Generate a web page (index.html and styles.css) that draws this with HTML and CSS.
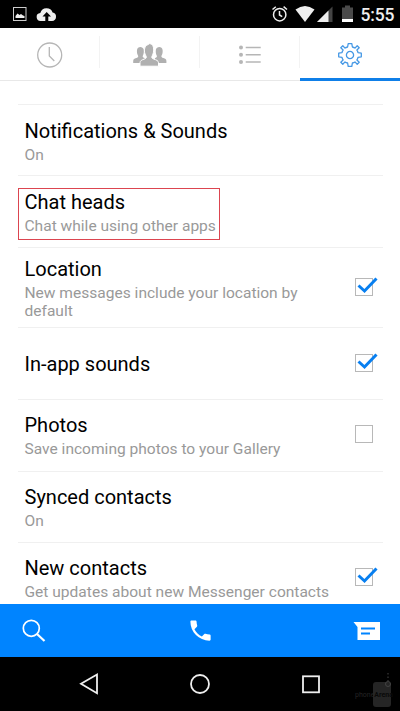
FILE: index.html
```html
<!DOCTYPE html>
<html lang="en">
<head>
<meta charset="utf-8">
<title>Messenger settings</title>
<link rel="stylesheet" href="styles.css">
</head>
<body>
<div class="screen">
  <header class="status">
    <svg class="status-left" width="60" height="28" viewBox="0 0 60 28">
      <rect x="13.500" y="7.500" width="12.500" height="13" fill="none" stroke="#ccc"/>
      <path d="M15.500 18v-2l2-2.500 2 1.500 1.500-1 2 1.500 1.500 .5v2z" fill="#eee"/>
      <path d="M41 21a4 4 0 0 1-.7-8 6.500 6.500 0 0 1 12.300-.5A4.300 4.300 0 0 1 52 21z" fill="#eee"/>
      <path d="M46.700 12l4.300 4.600h-2.700V21h-3v-4.400h-2.800z" fill="#000"/>
    </svg>
    <svg class="status-right" width="72" height="28" viewBox="270 0 72 28">
      <g fill="none" stroke="#eee" stroke-width="1.500"><circle cx="279.700" cy="14.700" r="6.200"/><path d="M279.500 11v4l2.700 1.700M272.500 9.500l3.300-2.800M283.600 6.700l3.400 2.800"/></g>
      <path d="M295.500 9.500Q305 2.500 314.500 9.500L305 22z" fill="#eee"/>
      <path d="M332.500 6.500V22H317z" fill="#444"/><path d="M328.500 10.500V22H317z" fill="#eee"/>
    </svg>
    <svg class="battery" width="12" height="28" viewBox="0 0 12 28"><path d="M0 7.500h3V5.500h5v2h3V22H0z" fill="#4a4a4a"/><path d="M0 19h11v3H0z" fill="#fff"/></svg>
    <span class="time">5:55</span>
  </header>
  <nav class="tabs">
    <div class="tab"><svg width="28" height="28" viewBox="0 0 28 28" fill="none" stroke="#b6b6b6" stroke-width="1.300"><circle cx="13.700" cy="14" r="12"/><path d="M13.300 6v9l5 5"/></svg></div>
    <div class="tab"><svg width="36" height="28" viewBox="0 0 36 28" fill="#b0b0b0">
      <path d="M1.200 22v-2c0-1.600 1.200-2.200 3-2.900 1.600-.6 2.500-1.200 1.800-2.600C5 13 4.800 11 5 9 5.300 5 11 5 11.700 8.500c.3 2.200.1 4.500-.8 6-.7 1.400.2 2 1.800 2.600v5z"/>
      <path d="M34.400 22v-2c0-1.600-1.200-2.200-3-2.900-1.600-.6-2.500-1.200-1.800-2.600 1-1.500 1.200-3.500 1-5.500-.3-4-6-4-6.700-.5-.3 2.200-.1 4.500.8 6 .7 1.400-.2 2-1.800 2.600v5z"/>
      <path d="M8 25.200v-3.500c0-2 2-2.900 4.300-3.600 2.200-.7 2.500-1.800 1.500-3.500-1.200-2-1.500-4-1.300-6.500.4-3.800 3-4 5.300-5.600 2.800.8 3.800 2.800 3.800 5.600 0 2.500-.2 4.500-1.300 6.500-1 1.700-.7 2.800 1.500 3.500 2.300.7 4.700 1.600 4.700 3.600v3.500z" stroke="#fff" stroke-width="1"/></svg></div>
    <div class="tab"><svg width="24" height="24" viewBox="0 0 24 24" fill="#b6b6b6" stroke="#b6b6b6"><g stroke="none"><circle cx="3" cy="4.500" r="2"/><circle cx="3" cy="11.700" r="2"/><circle cx="3" cy="19" r="2"/></g><path d="M7.700 4.500h15M7.700 11.700h15M7.700 19h15" stroke-width="1.400"/></svg></div>
    <div class="tab active"><svg width="26" height="26" viewBox="-13 -13 26 26" fill="none" stroke="#4598e5" stroke-width="1.300" stroke-linejoin="round"><circle r="3.600"/><path d="M-1.800-11.300H1.800L2.400-8Q4-7.700 5-6.900L7.200-9.200 9.200-7.200 6.900-5Q7.700-4 8-2.400L11.300-1.800V1.800L8 2.400Q7.700 4 6.900 5L9.200 7.200 7.200 9.200 5 6.900Q4 7.700 2.400 8L1.800 11.300H-1.800L-2.400 8Q-4 7.700-5 6.900L-7.200 9.200-9.200 7.200-6.900 5Q-7.700 4-8 2.400L-11.300 1.800V-1.800L-8-2.400Q-7.700-4-6.900-5L-9.200-7.200-7.200-9.200-5-6.900Q-4-7.700-2.400-8z"/></svg></div>
  </nav>
  <main class="list">
    <section class="row notifications"><div class="copy"><h2>Notifications &amp; Sounds</h2><p>On</p></div></section>
    <section class="row chat"><div class="copy highlight"><h2>Chat heads</h2><p>Chat while using other apps</p></div></section>
    <section class="row location"><div class="copy"><h2>Location</h2><p>New messages include your location by default</p></div><span class="box checked"><svg width="24" height="18" viewBox="0 0 24 18"><path d="M3.500 8.500l6 5.500L21.500 1.500"/></svg></span></section>
    <section class="row sounds"><div class="copy"><h2>In-app sounds</h2></div><span class="box checked"><svg width="24" height="18" viewBox="0 0 24 18"><path d="M3.500 8.500l6 5.500L21.500 1.500"/></svg></span></section>
    <section class="row photos"><div class="copy"><h2>Photos</h2><p>Save incoming photos to your Gallery</p></div><span class="box"></span></section>
    <section class="row synced"><div class="copy"><h2>Synced contacts</h2><p>On</p></div></section>
    <section class="row contacts"><div class="copy"><h2>New contacts</h2><p>Get updates about new Messenger contacts</p></div><span class="box checked"><svg width="24" height="18" viewBox="0 0 24 18"><path d="M3.500 8.500l6 5.500L21.500 1.500"/></svg></span></section>
  </main>
  <footer class="actions">
    <svg width="24" height="24" viewBox="0 0 24 24" fill="none" stroke="#fff"><circle cx="9.300" cy="9.300" r="8" stroke-width="1.700"/><path d="M15 15l7.500 7" stroke-width="2.200"/></svg>
    <svg class="phone" width="27" height="27" viewBox="0 0 24 24" fill="#fff"><path d="M6.620 10.790c1.440 2.830 3.760 5.140 6.590 6.590l2.200-2.200c.27-.27.67-.36 1.020-.24 1.120.37 2.330.57 3.570.57.550 0 1 .450 1 1V20c0 .550-.450 1-1 1-9.390 0-17-7.610-17-17 0-.550.450-1 1-1h3.500c.550 0 1 .450 1 1 0 1.250.2 2.450.57 3.570.110.350.030.740-.250 1.020z"/></svg>
    <svg width="28" height="20" viewBox="0 0 28 20"><path d="M.5 1H27v18H4.500V6z" fill="#fff"/><path d="M8 7.500h14M8 12.500h9" stroke="#0084ff" stroke-width="1.800"/></svg>
  </footer>
  <div class="system">
    <svg width="22" height="24" viewBox="0 0 22 24"><path d="M19 2.500v18.700L3 11.800z"/></svg>
    <svg width="22" height="24" viewBox="0 0 22 24"><circle cx="11" cy="12" r="9"/></svg>
    <svg width="22" height="24" viewBox="0 0 22 24"><rect x="3" y="4.300" width="16" height="16"/></svg>
    <div class="watermark"><svg width="40" height="38" viewBox="0 0 40 38"><rect x="19" y="11" width="18" height="25" rx="3" fill="#252525"/><circle cx="34" cy="13" r="2.500" fill="none" stroke="#444"/><path d="M34 2v8" fill="none" stroke="#444" stroke-dasharray="1.500 2"/></svg><span class="brand">phone<b>Arena</b></span></div>
  </div>
</div>
</body>
</html>
```
FILE: styles.css
```css
* { box-sizing: border-box; }
body { margin: 0; font-family: Roboto, "Liberation Sans", sans-serif; background: #fff; }
svg { display: block; flex: none; }
.screen { width: 400px; height: 711px; display: flex; flex-direction: column; overflow: hidden; }
.status { height: 28px; flex: none; display: flex; align-items: center; background: #000; color: #eee; }
.status-right { margin-left: 210px; }
.time { margin: 2px 0 0 6.5px; font-size: 17.5px; line-height: 22px; font-weight: 500; letter-spacing: -.2px; }
.tabs { height: 53px; flex: none; display: grid; grid-template-columns: repeat(4, 1fr); border-bottom: 1px solid #e8e8e8; }
.tab { position: relative; display: flex; justify-content: center; align-items: center; height: 53px; }
.tab:not(.active)::after { content: ""; position: absolute; right: 0; top: 8px; width: 1px; height: 32px; background: #f3f3f3; }
.active { border-bottom: 3px solid #0f7fe8; padding-top: 3px; }
.list { flex: 1; min-height: 0; margin: 23px 17px 0 18px; overflow: hidden; }
.row { display: flex; justify-content: space-between; border-top: 1px solid #f0f0f0; padding-left: 6.5px; }
.copy { width: 300px; }
h2, p { margin: 0; font-weight: 400; }
h2 { font-size: 20px; line-height: 26px; color: #000; white-space: nowrap; }
p { font-size: 15.55px; line-height: 18px; color: #999; }
.notifications { height: 71px; padding-top: 13px; }
.notifications p, .photos p { margin-top: 2px; }
.chat { height: 72px; padding: 12px 0 0; }
.highlight { width: 202px; height: 52px; border: 1px solid #dc4550; padding: 0 0 0 5.5px; }
.highlight p { margin-top: 2px; white-space: nowrap; }
.location { height: 80px; padding-top: 8px; }
.location p { margin-top: 2px; }
.sounds { height: 72px; padding-top: 23px; }
.photos { height: 72px; padding-top: 12px; }
.synced { height: 71px; padding-top: 12px; }
.synced p { margin-top: 2px; }
.contacts { height: 72px; padding-top: 12px; }
.contacts p { margin-top: 2px; white-space: nowrap; }
.box { position: relative; flex: none; width: 18px; height: 18px; margin-right: 10px; border: 1px solid #b8b8b8; }
.box svg { position: absolute; left: -1px; top: -2px; }
.box path { fill: none; stroke: #087ff0; stroke-width: 3; }
.location .box { margin-top: 22px; }
.sounds .box { margin-top: 3px; }
.photos .box { margin-top: 13px; }
.contacts .box { margin-top: 13px; }
.actions { height: 53px; flex: none; display: flex; justify-content: space-between; align-items: center; padding: 0 19px 0 22px; background: #0084ff; }
.phone { margin-left: 1px; }
.system { position: relative; height: 54px; flex: none; display: flex; justify-content: center; align-items: center; gap: 89px; background: #000; }
.system > svg { fill: none; stroke: #eee; stroke-width: 1.8; }
.watermark { position: absolute; right: 6px; top: 14px; }
.brand { position: absolute; left: 1px; top: 20px; font-size: 7px; line-height: 9px; color: #252525; }
.brand b { color: #090909; }
```
